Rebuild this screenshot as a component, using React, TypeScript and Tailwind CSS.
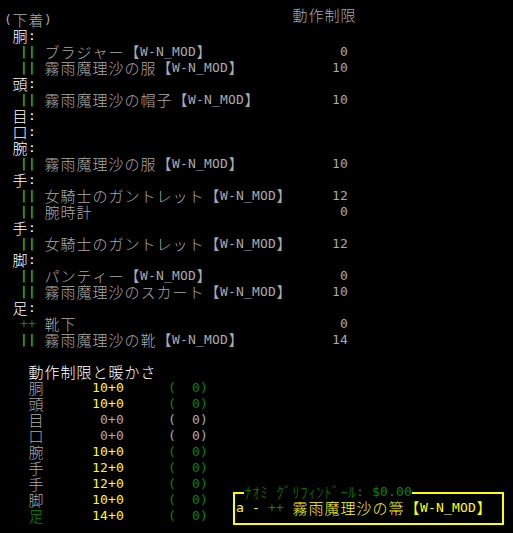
import React from 'react';

const GRAY = 'text-[#aaaaaa]';
const WHITE = 'text-[#ffffff]';
const GREEN = 'text-[#22e022]';
const DKGREEN = 'text-[#008a00]';
const YELLOW = 'text-[#ffff00]';

// one terminal cell per character: 8px for half-width, 16px for full-width
function T({ s, c }: { s: string; c: string }) {
  return (
    <>
      {Array.from(s).map((ch, i) => {
        const cp = ch.codePointAt(0) ?? 0;
        const kana = cp >= 0xff61 && cp <= 0xff9f;
        const wide = cp >= 0x2e80 && !kana;
        const cls = wide
          ? "w-[16px] text-[15px] font-light font-['Noto_Sans_CJK_JP',sans-serif]"
          : kana
          ? "w-[8px] text-[15px] font-light font-['Noto_Sans_CJK_JP',sans-serif]"
          : "w-[8px] text-[13px] font-['DejaVu_Sans_Mono',monospace]";
        return (
          <span key={i} className={`inline-block shrink-0 text-center whitespace-pre leading-[16px] ${cls} ${c}`}>
            {ch}
          </span>
        );
      })}
    </>
  );
}

type Item = { mark: '||' | '++'; name: string; val: string };
type Slot = { part: string; items: Item[] };

const SLOTS: Slot[] = [
  { part: '胴', items: [
    { mark: '||', name: 'ブラジャー【W-N_MOD】', val: '0' },
    { mark: '||', name: '霧雨魔理沙の服【W-N_MOD】', val: '10' },
  ] },
  { part: '頭', items: [{ mark: '||', name: '霧雨魔理沙の帽子【W-N_MOD】', val: '10' }] },
  { part: '目', items: [] },
  { part: '口', items: [] },
  { part: '腕', items: [{ mark: '||', name: '霧雨魔理沙の服【W-N_MOD】', val: '10' }] },
  { part: '手', items: [
    { mark: '||', name: '女騎士のガントレット【W-N_MOD】', val: '12' },
    { mark: '||', name: '腕時計', val: '0' },
  ] },
  { part: '手', items: [{ mark: '||', name: '女騎士のガントレット【W-N_MOD】', val: '12' }] },
  { part: '脚', items: [
    { mark: '||', name: 'パンティー【W-N_MOD】', val: '0' },
    { mark: '||', name: '霧雨魔理沙のスカート【W-N_MOD】', val: '10' },
  ] },
  { part: '足', items: [
    { mark: '++', name: '靴下', val: '0' },
    { mark: '||', name: '霧雨魔理沙の靴【W-N_MOD】', val: '14' },
  ] },
];

const STATS: { part: string; val: string; on: boolean; foot?: boolean }[] = [
  { part: '胴', val: '10+0', on: true },
  { part: '頭', val: '10+0', on: true },
  { part: '目', val: '0+0', on: false },
  { part: '口', val: '0+0', on: false },
  { part: '腕', val: '10+0', on: true },
  { part: '手', val: '12+0', on: true },
  { part: '手', val: '12+0', on: true },
  { part: '脚', val: '10+0', on: true },
  { part: '足', val: '14+0', on: true, foot: true },
];

export default function App() {
  return (
    <div className="relative w-[513px] h-[533px] bg-black overflow-hidden">
      <div className="pl-[4px] pt-[12px]">
        <div className="flex h-[16px] w-[352px] justify-between">
          <div className="flex"><T s="(下着)" c={GRAY} /></div>
          <div className="flex -translate-y-[5px]"><T s="動作制限" c={GRAY} /></div>
        </div>
        {SLOTS.map((slot, si) => (
          <React.Fragment key={si}>
            <div className="flex h-[16px]"><T s={` ${slot.part}:`} c={WHITE} /></div>
            {slot.items.map((it, ii) => (
              <div key={ii} className="flex h-[16px] w-[344px]">
                <T s="  " c={GRAY} />
                <T s={it.mark} c={it.mark === '||' ? GREEN : DKGREEN} />
                <T s=" " c={GRAY} />
                <div className="flex flex-1"><T s={it.name} c={GRAY} /></div>
                <T s={it.val} c={GRAY} />
              </div>
            ))}
          </React.Fragment>
        ))}
        <div className="h-[16px]" />
        <div className="flex h-[16px]"><T s="   動作制限と暖かさ" c={WHITE} /></div>
        {STATS.map((r, i) => (
          <div key={i} className="flex h-[16px]">
            <T s="   " c={GRAY} />
            <T s={r.part} c={r.foot ? DKGREEN : GRAY} />
            <div className="flex w-[80px] justify-end"><T s={r.val} c={r.on ? YELLOW : GRAY} /></div>
            <div className="w-[44px]" />
            <T s="(  0)" c={r.on ? DKGREEN : GRAY} />
          </div>
        ))}
      </div>

      <div className="absolute left-[233px] top-[492px] w-[271px] h-[33px] border-2 border-[#ffff00] pl-[1px] pt-[6px]">
        <div className="absolute -top-[10px] left-[9px] flex bg-black">
          <T s="ﾅｵﾐ ｸﾞﾘﾌｨﾝﾄﾞｰﾙ: $0.00" c={DKGREEN} />
        </div>
        <div className="flex h-[16px]">
          <T s="a - " c={YELLOW} />
          <T s="++" c={DKGREEN} />
          <T s=" 霧雨魔理沙の箒【W-N_MOD】" c={YELLOW} />
        </div>
      </div>
    </div>
  );
}
